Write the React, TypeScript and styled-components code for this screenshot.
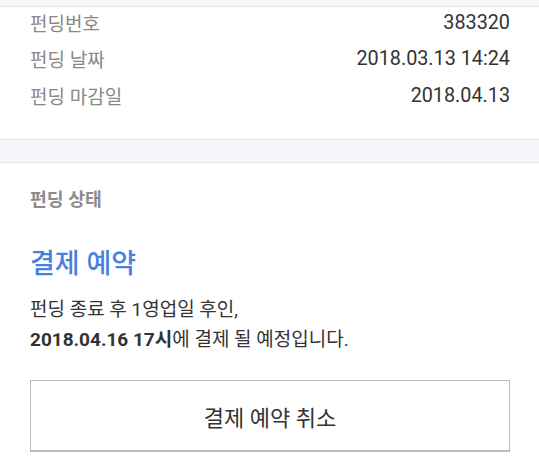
import React from "react";
import styled, { createGlobalStyle } from "styled-components";

const Global = createGlobalStyle`
  html, body { margin: 0; padding: 0; background: #ffffff; }
  body { font-family: Roboto, "Noto Sans CJK KR", "Noto Sans", sans-serif; -webkit-font-smoothing: antialiased; }
  * { box-sizing: border-box; }
`;

const Page = styled.div`
  width: 539px;
  min-height: 459px;
  background: #ffffff;
  overflow: hidden;
`;

const TopBand = styled.div`
  height: 7px;
  background: #f5f6f8;
  border-bottom: 1px solid #e2e3e6;
`;

const InfoSection = styled.section`
  display: grid;
  row-gap: 12.5px;
  padding: 3px 29px 32px 30px;
`;

const Row = styled.div`
  display: flex;
  justify-content: space-between;
  align-items: center;
  height: 24px;
`;

const Label = styled.span`
  font-size: 19px;
  color: #888888;
`;

const Value = styled.span`
  font-family: Roboto, sans-serif;
  font-size: 19.8px;
  color: #333333;
`;

const Divider = styled.div`
  height: 24px;
  background: #f5f6f9;
  border-top: 1px solid #e4e5e8;
  border-bottom: 1px solid #e4e5e8;
`;

const StatusSection = styled.section`
  display: flex;
  flex-direction: column;
  padding: 25px 29px 0 30px;
`;

const SectionTitle = styled.h3`
  margin: 0;
  height: 24px;
  line-height: 24px;
  font-size: 18.3px;
  font-weight: 700;
  color: #8c8c8c;
`;

const StatusTitle = styled.h2`
  margin: 35px 0 0;
  line-height: 34px;
  font-size: 27px;
  font-weight: 500;
  color: #4a7fe0;
`;

const Description = styled.p`
  margin: 13.5px 0 0;
  font-size: 19px;
  line-height: 30px;
  color: #333333;
`;

const Strong = styled.strong`
  font-weight: 700;
`;

const CancelButton = styled.button`
  margin-top: 25.5px;
  width: 480px;
  height: 72px;
  background: #ffffff;
  border: 1px solid #bdbdbd;
  border-bottom-width: 2px;
  font-family: Roboto, "Noto Sans CJK KR", sans-serif;
  font-size: 22px;
  color: #333333;
  cursor: pointer;
`;

const rows = [
  { label: "펀딩번호", value: "383320" },
  { label: "펀딩 날짜", value: "2018.03.13 14:24" },
  { label: "펀딩 마감일", value: "2018.04.13" },
];

export default function App() {
  return (
    <Page>
      <Global />
      <TopBand />
      <InfoSection>
        {rows.map((r) => (
          <Row key={r.label}>
            <Label>{r.label}</Label>
            <Value>{r.value}</Value>
          </Row>
        ))}
      </InfoSection>
      <Divider />
      <StatusSection>
        <SectionTitle>펀딩 상태</SectionTitle>
        <StatusTitle>결제 예약</StatusTitle>
        <Description>
          펀딩 종료 후 1영업일 후인,
          <br />
          <Strong>2018.04.16 17시</Strong>에 결제 될 예정입니다.
        </Description>
        <CancelButton type="button">결제 예약 취소</CancelButton>
      </StatusSection>
    </Page>
  );
}
